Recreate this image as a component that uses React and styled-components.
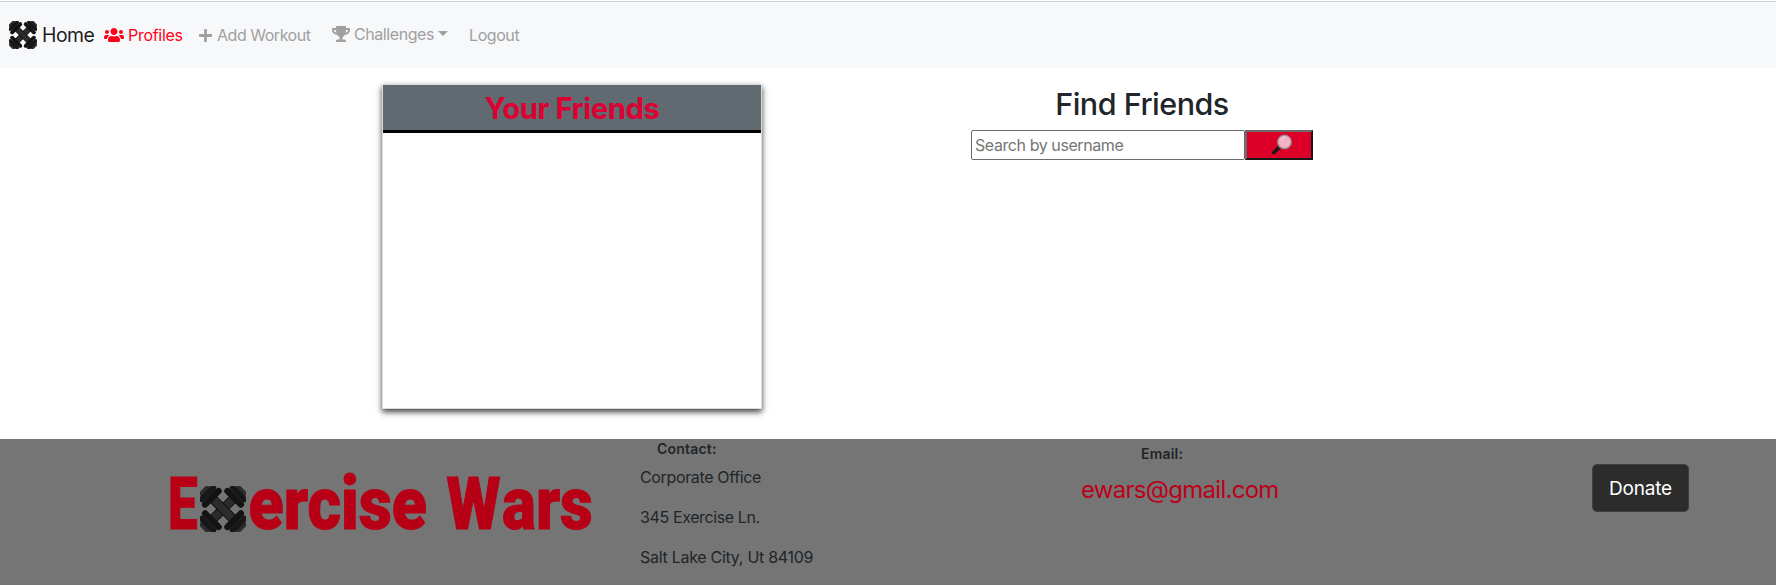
import React from "react";
import styled, { createGlobalStyle } from "styled-components";
import { FaUsers, FaPlus, FaTrophy } from "react-icons/fa";

const Global = createGlobalStyle`
  *, *::before, *::after { box-sizing: border-box; }
  body {
    margin: 0;
    background: #fff;
    color: #212529;
    font-family: Inter, "Liberation Sans", sans-serif;
    font-size: 16px;
    line-height: 24px;
  }
  h1, h2, h3, p { margin: 0; }
`;

const Page = styled.div`
  height: 586px;
  display: flex;
  flex-direction: column;
  overflow: hidden;
`;

const Navbar = styled.nav`
  height: 68px;
  padding: 1px 0 0 9px;
  display: flex;
  align-items: center;
  background: #f7f8fa;
  border-top: 1px solid #fff;
  box-shadow: inset 0 1px 0 #cfd2d4;
`;

const Brand = styled.a`
  display: flex;
  align-items: center;
  width: 95px;
  gap: 5px;
  font-size: 19.4px;
  letter-spacing: -0.5px;
  color: rgba(0, 0, 0, 0.9);
  white-space: nowrap;
`;

const NavLink = styled.a`
  display: flex;
  align-items: center;
  width: ${(p) => p.$width}px;
  gap: 4px;
  color: ${(p) => (p.$active ? "#ff0019" : "#a0a0a1")};
  letter-spacing: ${(p) => p.$tracking || -0.5}px;
  padding-bottom: ${(p) => p.$lift || 0}px;
  white-space: nowrap;
`;

const Caret = styled.span`
  border: 5px solid transparent;
  border-top-color: currentColor;
  border-bottom: 0;
  margin: 0 0 2px 0;
`;

const Main = styled.main`
  height: 371px;
  flex: none;
  display: flex;
  padding: 16px 0 0 382px;
`;

const FriendsCard = styled.section`
  width: 380px;
  height: 325px;
  border: 1px solid #dcdcdc;
  box-shadow: 0 3px 6px rgba(0, 0, 0, 0.75);
  background: #fff;
`;

const FriendsTitle = styled.h1`
  height: 48px;
  background: #606a70;
  border-bottom: 3px solid #000;
  color: #dc0032;
  text-align: center;
  font-size: 29.3px;
  font-weight: 700;
  line-height: 47px;
  letter-spacing: -0.45px;
`;

const Finder = styled.section`
  width: 342px;
  margin-left: 209px;
  padding-top: 2px;
`;

const FinderTitle = styled.h2`
  font-size: 30.5px;
  font-weight: 500;
  line-height: 36px;
  text-align: center;
  letter-spacing: -0.5px;
  margin-bottom: 8px;
`;

const SearchRow = styled.form`
  display: flex;
  height: 30px;
`;

const SearchInput = styled.input`
  width: 274px;
  height: 30px;
  border: 1px solid #6b6b6b;
  border-radius: 2px;
  padding: 1px 3px;
  font: inherit;
  letter-spacing: -0.42px;
  &::placeholder { color: #757575; opacity: 1; }
`;

const SearchButton = styled.button`
  width: 68px;
  height: 30px;
  padding: 0 0 0 5px;
  display: flex;
  align-items: center;
  justify-content: center;
  background: #dc0029;
  border: 2px solid;
  border-color: #6b6b6b #171717 #171717 #6b6b6b;
`;

const Footer = styled.footer`
  height: 146px;
  flex: none;
  display: flex;
  background: #757575;
`;

const LogoBox = styled.div`
  padding-left: 160px;
  width: 640px;
`;

const Contact = styled.address`
  width: 441px;
  font-style: normal;
  padding-top: 1px;
`;

const Label = styled.h3`
  font-size: 14px;
  line-height: 17px;
  font-weight: 600;
  letter-spacing: 0.2px;
  padding-left: ${(p) => p.$indent}px;
`;

const Lines = styled.div`
  display: flex;
  flex-direction: column;
  gap: 16px;
  margin-top: 8px;
`;

const Line = styled.p`
  letter-spacing: ${(p) => p.$tracking}px;
`;

const Email = styled.div`
  width: 511px;
  padding-top: 6px;
`;

const EmailLink = styled.a`
  display: block;
  margin-top: 10px;
  font-size: 24px;
  line-height: 36px;
  letter-spacing: -0.72px;
  color: #bd0019;
`;

const Donate = styled.button`
  margin-top: 25px;
  width: 97px;
  height: 48px;
  padding: 1px 0 0;
  border: 1px solid #384148;
  border-radius: 5px;
  background: #2c2c2c;
  color: #fff;
  font: inherit;
  font-size: 19px;
  letter-spacing: -0.2px;
`;

const Bell = ({ angle }) => (
  <g transform={`rotate(${angle} 23 23)`} strokeLinecap="round">
    <path d="M3 23H43" stroke="#111" strokeWidth="9.5" strokeLinecap="butt" />
    <path d="M8 23H38" stroke="#2c2c2c" strokeWidth="7.5" strokeLinecap="butt" />
    <path d="M-3 19V27M49 19V27" stroke="#2c2c2c" strokeWidth="5" />
    <path d="M1.2 15V31M44.8 15V31" stroke="#171717" strokeWidth="6" />
    <path d="M7.2 13.5V32.5M38.8 13.5V32.5" stroke="#131313" strokeWidth="6.4" />
    <path d="M4 16V30M42 16V30" stroke="#2b2b2b" strokeWidth=".7" />
  </g>
);

const Barbells = ({ size, ...rest }) => (
  <svg width={size} height={size} viewBox="0 0 46 46" {...rest}>
    <Bell angle={-45} />
    <Bell angle={45} />
  </svg>
);

const wordParts = [
  { text: "E", x: 168, size: 72.5, squeeze: 0.73 },
  { text: "ercise", x: 248.5, size: 74, squeeze: 0.872 },
  { text: "W", x: 446.5, size: 72.5, squeeze: 0.86 },
  { text: "ars", x: 502, size: 74, squeeze: 0.862 },
];

const Wordmark = () => (
  <svg
    width="440"
    height="146"
    viewBox="160 439 440 146"
    fill="#b70015"
    stroke="#b70015"
    strokeWidth="1"
    fontFamily="Roboto, sans-serif"
    fontWeight="900"
  >
    {wordParts.map((p) => (
      <text key={p.text} fontSize={p.size} transform={`translate(${p.x} 529) scale(${p.squeeze} 1)`}>
        {p.text}
      </text>
    ))}
    <Barbells size={46} x="200" y="486" stroke="none" />
  </svg>
);

const Magnifier = () => (
  <svg width="22" height="22" viewBox="0 0 22 22">
    <path d="M2.7 18.8L9 12.5" stroke="#181818" strokeWidth="3.4" strokeLinecap="round" />
    <path d="M8 13.5L10 11.5" stroke="#777" strokeWidth="1.5" />
    <circle cx="13.5" cy="7.9" r="6.8" fill="#f3b3c5" stroke="#938b8f" strokeWidth="1.3" />
    <path d="M10 6Q11 3.8 13.5 3.6" fill="none" stroke="#f8d4df" />
  </svg>
);

export default function App() {
  return (
    <Page>
      <Global />
      <Navbar>
        <Brand><Barbells size={28} />Home</Brand>
        <NavLink $active $width={94} $tracking={-0.28}><FaUsers size={20} />Profiles</NavLink>
        <NavLink $width={134} $tracking={-0.47}><FaPlus size={15} />Add Workout</NavLink>
        <NavLink $width={137} $lift={2} $tracking={-0.42}><FaTrophy size={18} />Challenges<Caret /></NavLink>
        <NavLink $width={60} $tracking={-0.42}>Logout</NavLink>
      </Navbar>
      <Main>
        <FriendsCard><FriendsTitle>Your Friends</FriendsTitle></FriendsCard>
        <Finder>
          <FinderTitle>Find Friends</FinderTitle>
          <SearchRow>
            <SearchInput placeholder="Search by username" />
            <SearchButton type="button" aria-label="Search"><Magnifier /></SearchButton>
          </SearchRow>
        </Finder>
      </Main>
      <Footer>
        <LogoBox><Wordmark /></LogoBox>
        <Contact>
          <Label $indent={17}>Contact:</Label>
          <Lines>
            <Line $tracking={-0.35}>Corporate Office</Line>
            <Line $tracking={-0.38}>345 Exercise Ln.</Line>
            <Line $tracking={-0.28}>Salt Lake City, Ut 84109</Line>
          </Lines>
        </Contact>
        <Email>
          <Label $indent={60}>Email:</Label>
          <EmailLink>ewars@gmail.com</EmailLink>
        </Email>
        <Donate>Donate</Donate>
      </Footer>
    </Page>
  );
}
